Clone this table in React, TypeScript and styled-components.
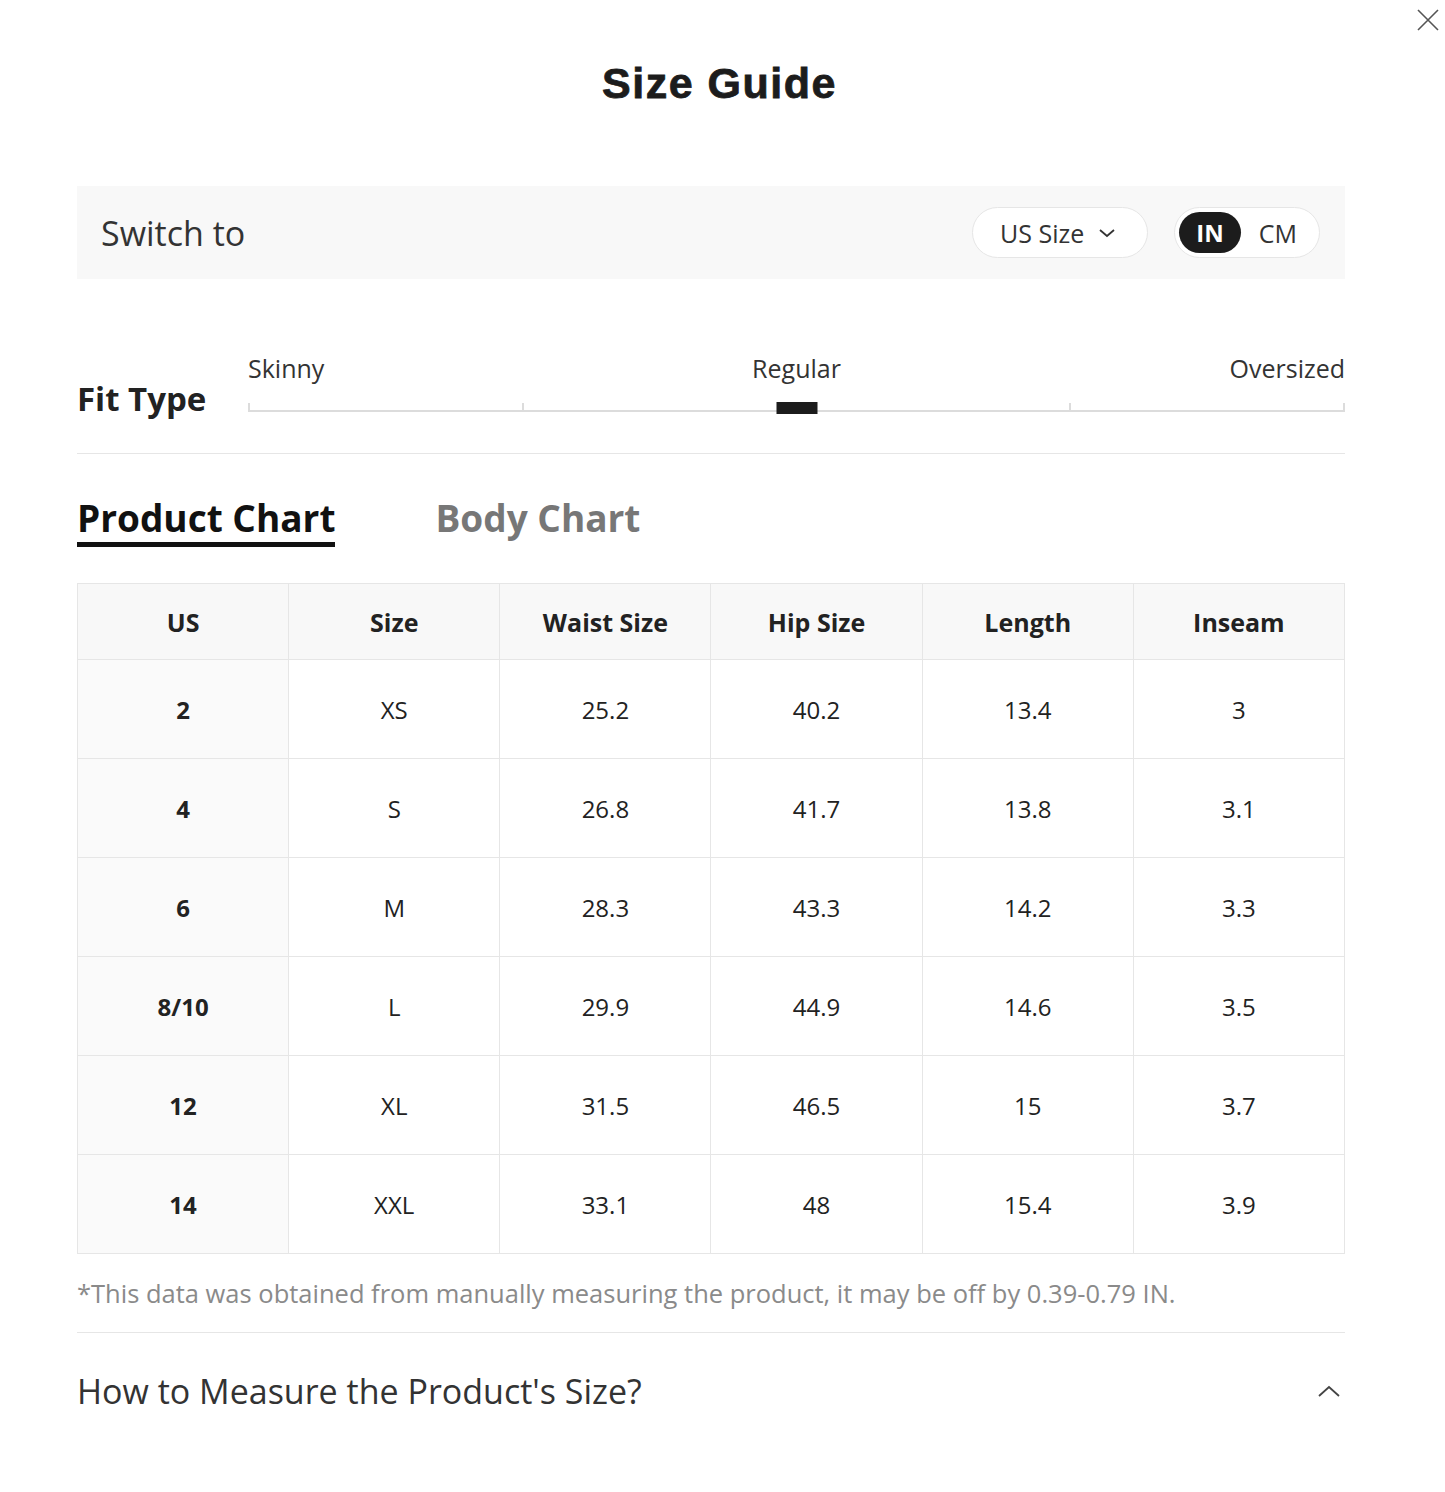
import React from 'react';
import styled, { createGlobalStyle } from 'styled-components';

const rows = [
  { us: '2', size: 'XS', waist: '25.2', hip: '40.2', length: '13.4', inseam: '3' },
  { us: '4', size: 'S', waist: '26.8', hip: '41.7', length: '13.8', inseam: '3.1' },
  { us: '6', size: 'M', waist: '28.3', hip: '43.3', length: '14.2', inseam: '3.3' },
  { us: '8/10', size: 'L', waist: '29.9', hip: '44.9', length: '14.6', inseam: '3.5' },
  { us: '12', size: 'XL', waist: '31.5', hip: '46.5', length: '15', inseam: '3.7' },
  { us: '14', size: 'XXL', waist: '33.1', hip: '48', length: '15.4', inseam: '3.9' },
];

const headers = ['US', 'Size', 'Waist Size', 'Hip Size', 'Length', 'Inseam'];

export default function App() {
  return (
    <>
      <GlobalStyle />
      <Page>
        <CloseButton aria-label="close">
          <svg width="24" height="24" viewBox="0 0 24 24" fill="none" stroke="#555" strokeWidth="1.6">
            <path d="M2 2 L22 22 M22 2 L2 22" />
          </svg>
        </CloseButton>

        <Title>Size Guide</Title>

        <Content>
          <SwitchBar>
            <SwitchLabel>Switch to</SwitchLabel>
            <SizeSelect>
              US Size
              <svg width="18" height="10" viewBox="0 0 18 10" fill="none" stroke="#333" strokeWidth="1.8">
                <path d="M2 2 L9 8 L16 2" />
              </svg>
            </SizeSelect>
            <UnitToggle>
              <UnitOption $active>IN</UnitOption>
              <UnitOption>CM</UnitOption>
            </UnitToggle>
          </SwitchBar>

          <FitRow>
            <FitLabel>Fit Type</FitLabel>
            <Slider>
              <FitOptions>
                <FitOption $align="start">Skinny</FitOption>
                <FitOption $align="center">Regular</FitOption>
                <FitOption $align="end">Oversized</FitOption>
              </FitOptions>
              <Track>
                <Segment />
                <Segment />
                <Segment />
                <Segment $last />
                <Thumb />
              </Track>
            </Slider>
          </FitRow>

          <Divider $top={41} />

          <Tabs>
            <Tab $active>Product Chart</Tab>
            <Tab>Body Chart</Tab>
          </Tabs>

          <Table>
            <thead>
              <tr>
                {headers.map((h) => (
                  <Th key={h}>{h}</Th>
                ))}
              </tr>
            </thead>
            <tbody>
              {rows.map((r) => (
                <tr key={r.us}>
                  <Td $first>{r.us}</Td>
                  <Td>{r.size}</Td>
                  <Td>{r.waist}</Td>
                  <Td>{r.hip}</Td>
                  <Td>{r.length}</Td>
                  <Td>{r.inseam}</Td>
                </tr>
              ))}
            </tbody>
          </Table>

          <Note>*This data was obtained from manually measuring the product, it may be off by 0.39-0.79 IN.</Note>

          <Divider $top={21} />

          <Accordion>
            <AccordionTitle>How to Measure the Product's Size?</AccordionTitle>
            <svg width="24" height="14" viewBox="0 0 24 14" fill="none" stroke="#444" strokeWidth="1.8">
              <path d="M2 12 L12 3 L22 12" />
            </svg>
          </Accordion>
        </Content>
      </Page>
    </>
  );
}

const GlobalStyle = createGlobalStyle`
  body {
    margin: 0;
    background: #fff;
    font-family: "Open Sans", "Noto Sans", sans-serif;
    color: #222;
  }
`;

const Page = styled.div`
  position: relative;
  min-height: 1492px;
  padding-top: 58px;
  box-sizing: border-box;
`;

const CloseButton = styled.button`
  position: absolute;
  top: 8px;
  right: 5px;
  padding: 0;
  border: none;
  background: none;
  display: flex;
`;

const Title = styled.h1`
  margin: 0 0 0 -6px;
  text-align: center;
  font-family: "Liberation Sans", Arial, sans-serif;
  font-weight: 900;
  font-size: 43px;
  line-height: 50px;
  letter-spacing: 1.5px;
  color: #1c1c1c;
  -webkit-text-stroke: 0.8px #1c1c1c;
`;

const Content = styled.div`
  margin: 78px 0 0 77px;
  width: 1268px;
`;

const SwitchBar = styled.div`
  display: flex;
  align-items: center;
  height: 93px;
  padding: 0 25px 0 24px;
  box-sizing: border-box;
  background: #f8f8f8;
`;

const SwitchLabel = styled.div`
  flex: 1;
  font-size: 34px;
  color: #333;
`;

const SizeSelect = styled.div`
  display: flex;
  align-items: center;
  gap: 14px;
  height: 51px;
  padding: 0 31px 0 27px;
  box-sizing: border-box;
  border: 1px solid #e6e6e6;
  border-radius: 26px;
  background: #fff;
  font-size: 25px;
  color: #333;
`;

const UnitToggle = styled.div`
  display: flex;
  align-items: center;
  gap: 18px;
  margin-left: 26px;
  height: 51px;
  padding: 0 22px 0 4px;
  box-sizing: border-box;
  border: 1px solid #e6e6e6;
  border-radius: 26px;
  background: #fff;
`;

const UnitOption = styled.div<{ $active?: boolean }>`
  display: flex;
  align-items: center;
  height: 41px;
  padding: 0 ${(p) => (p.$active ? '17px' : '0')};
  border-radius: 21px;
  background: ${(p) => (p.$active ? '#1c1c1c' : 'transparent')};
  color: ${(p) => (p.$active ? '#fff' : '#333')};
  font-weight: ${(p) => (p.$active ? 700 : 400)};
  font-size: ${(p) => (p.$active ? '24px' : '25px')};
`;

const FitRow = styled.div`
  display: flex;
  align-items: flex-end;
  margin-top: 73px;
`;

const FitLabel = styled.div`
  width: 171px;
  flex-shrink: 0;
  font-size: 33px;
  font-weight: 700;
  line-height: 32px;
  margin-bottom: -3px;
  color: #222;
`;

const Slider = styled.div`
  flex: 1;
  display: flex;
  flex-direction: column;
`;

const FitOptions = styled.div`
  display: grid;
  grid-template-columns: 1fr auto 1fr;
  font-size: 25px;
  line-height: 33px;
  color: #333;
`;

const FitOption = styled.span<{ $align: 'start' | 'center' | 'end' }>`
  justify-self: ${(p) => p.$align};
`;

const Track = styled.div`
  position: relative;
  display: flex;
  margin-top: 18px;
`;

const Segment = styled.div<{ $last?: boolean }>`
  flex: 1;
  height: 7px;
  border-bottom: 2px solid #dcdcdc;
  border-left: 2px solid #dcdcdc;
  border-right: ${(p) => (p.$last ? '2px solid #dcdcdc' : 'none')};
`;

const Thumb = styled.div`
  position: absolute;
  left: 50%;
  bottom: -2px;
  width: 41px;
  height: 12px;
  transform: translateX(-50%);
  background: #1c1c1c;
`;

const Divider = styled.div<{ $top: number }>`
  margin-top: ${(p) => p.$top}px;
  height: 1px;
  background: #e6e6e6;
`;

const Tabs = styled.div`
  display: flex;
  gap: 100px;
  margin-top: 42px;
`;

const Tab = styled.div<{ $active?: boolean }>`
  font-size: 37px;
  font-weight: 700;
  line-height: 44px;
  padding-bottom: 2px;
  border-bottom: 5px solid ${(p) => (p.$active ? '#111' : 'transparent')};
  color: ${(p) => (p.$active ? '#111' : '#777')};
`;

const Table = styled.table`
  width: 100%;
  margin-top: 36px;
  border-collapse: collapse;
  table-layout: fixed;
  border: 1px solid #e3e3e3;
`;

const Th = styled.th`
  height: 75px;
  padding: 0;
  background: #f8f8f8;
  border: 1px solid #e6e6e6;
  font-size: 25px;
  font-weight: 700;
  color: #222;
  text-align: center;
`;

const Td = styled.td<{ $first?: boolean }>`
  height: 98px;
  padding: 0;
  border: 1px solid #e6e6e6;
  background: ${(p) => (p.$first ? '#fafafa' : '#fff')};
  font-size: 24px;
  font-weight: ${(p) => (p.$first ? 700 : 400)};
  color: #222;
  text-align: center;
`;

const Note = styled.p`
  margin: 22px 0 0;
  font-size: 25.5px;
  line-height: 35px;
  color: #8a8a8a;
`;

const Accordion = styled.div`
  display: flex;
  justify-content: space-between;
  align-items: center;
  margin-top: 35px;
  padding-right: 4px;
`;

const AccordionTitle = styled.div`
  font-size: 34px;
  line-height: 46px;
  color: #333;
`;
